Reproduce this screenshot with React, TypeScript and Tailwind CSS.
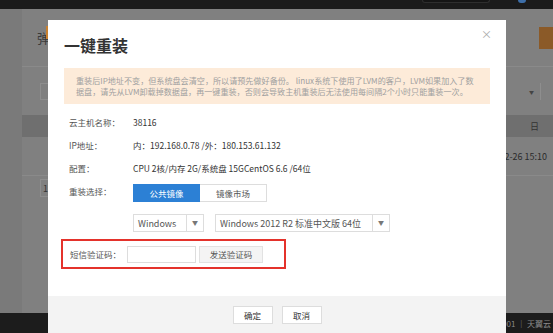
import type { ReactNode } from 'react';

const FONT = { fontFamily: '"Noto Sans CJK SC", "Noto Sans", sans-serif' };

function InfoRow({ label, children }: { label: string; children: ReactNode }) {
  return (
    <div className="flex h-[23px] items-center">
      <span className="w-[64px] shrink-0 text-[#555]">{label}</span>
      <span className="text-[#333]">{children}</span>
    </div>
  );
}

function SelectBox({ value, width }: { value: string; width: string }) {
  return (
    <div className={`flex h-[18px] ${width} items-stretch border border-[#ddd] bg-white`}>
      <span className="flex flex-1 items-center pl-[4px] text-[9px] text-[#555]">{value}</span>
      <span className="flex w-[17px] items-center justify-center border-l border-[#ddd]">
        <span className="text-[6px] leading-none text-[#777]">▼</span>
      </span>
    </div>
  );
}

// page behind the mask (already dimmed)
function BackgroundPage() {
  return (
    <div className="flex h-full flex-col bg-[#808080]">
      <div className="flex h-[9px] shrink-0 items-start bg-[#1b1b1b]">
        <div className="ml-[422px] h-[3px] w-[68px] rounded-b-[4px] border-x border-b border-[#2e2e2e] bg-[#151515]" />
        <div className="ml-[28px] h-[3px] w-[8px] rounded-b-full bg-[#3d6ea8]" />
      </div>
      <div className="flex flex-1">
        <div className="w-[22px] bg-[#7a7a7a]" />
        <div className="flex flex-1 flex-col">
          <div className="flex h-[58px] items-start border-b border-[#8a8a8a]">
            <span className="mt-[22px] ml-[15px] text-[13px] leading-none text-[#3a3a3a]">弹</span>
            <div className="mt-[17px] -ml-[4px] h-[13px] w-[3px] bg-[#c8802e]" />
            <div className="ml-auto mt-[18px] h-[22px] w-[14px] bg-[#8b5a28]" />
          </div>
          <div className="flex h-[48px] items-center">
            <div className="ml-[18px] h-[17px] w-[20px] border border-[#8e8e8e]" />
            <div className="ml-auto mr-[12px] flex h-[17px] items-center border-r border-[#8e8e8e] pr-[6px]">
              <span className="text-[5px] text-[#444]">▼</span>
            </div>
          </div>
          <div className="flex h-[22px] items-center bg-[#6f6f6f]">
            <span className="ml-auto mr-[14px] text-[9px] text-[#333]">日</span>
          </div>
          <div className="flex h-[39px] items-center border-b border-[#8a8a8a]">
            <span className="ml-auto mr-[6px] text-[9px] text-[#2b2b2b]">2-26 15:10</span>
          </div>
          <div className="mt-[3px] ml-[18px] flex h-[18px] w-[20px] items-center border border-[#8e8e8e] pl-[2px] text-[9px] text-[#333]">
            1
          </div>
        </div>
      </div>
      <div className="flex h-[20px] shrink-0 items-center bg-[#1c1c1c]">
        <span className="ml-auto mr-[2px] text-[8px] text-[#8a8a8a]">0001 ｜ 天翼云</span>
      </div>
    </div>
  );
}

export default function App() {
  return (
    <div className="relative h-[333px] w-[553px] overflow-hidden text-[8.5px] leading-[11px]" style={FONT}>
      <BackgroundPage />

      {/* ── Modal ── */}
      <div className="absolute top-[20px] left-[48px] flex h-[320px] w-[458px] flex-col bg-white">
        <div className="absolute top-[9px] right-[14px] text-[11px] leading-none text-[#aaa]">×</div>

        <div className="px-[16px]">
          <h1 className="pt-[15px] text-[16px] leading-[20px] font-bold text-[#333]">一键重装</h1>

          <div className="mt-[13px] h-[36px] whitespace-nowrap bg-[#fdebd9] px-[12px] py-[7px] text-[8.1px] text-[#a0a0a0]">
            重装后IP地址不变，但系统盘会清空，所以请预先做好备份。 linux系统下使用了LVM的客户，LVM如果加入了数
            <br />
            据盘，请先从LVM卸载掉数据盘，再一键重装，否则会导致主机重装后无法使用每间隔2个小时只能重装一次。
          </div>

          <div className="mt-[7px] flex flex-col pl-[5px]">
            <InfoRow label="云主机名称：">38116</InfoRow>
            <InfoRow label="IP地址：">内：192.168.0.78 /外：180.153.61.132</InfoRow>
            <InfoRow label="配置：">CPU 2核/内存 2G/系统盘 15GCentOS 6.6 /64位</InfoRow>

            <div className="mt-[4px] flex">
              <span className="w-[64px] shrink-0 pt-[2px] text-[#555]">重装选择：</span>
              <div className="flex flex-col">
                <div className="flex h-[18px]">
                  <span className="flex w-[67px] items-center justify-center bg-[#2c80d5] text-white">公共镜像</span>
                  <span className="flex w-[67px] items-center justify-center border border-l-0 border-[#ddd] text-[#555]">
                    镜像市场
                  </span>
                </div>
                <div className="mt-[12px] flex gap-[11px]">
                  <SelectBox value="Windows" width="w-[71px]" />
                  <SelectBox value="Windows 2012 R2 标准中文版 64位" width="w-[175px]" />
                </div>
              </div>
            </div>
          </div>

          <div className="mt-[7px] -ml-[3px] flex h-[30px] w-[225px] items-center border-2 border-[#e4322b] pl-[7px]">
            <span className="w-[57px] shrink-0 text-[#555]">短信验证码：</span>
            <div className="h-[17px] w-[69px] border border-[#ddd] bg-white" />
            <button
              type="button"
              className="ml-[3px] flex h-[17px] w-[64px] items-center justify-center border border-[#e2e2e2] bg-[#f4f4f4] text-[#555]"
            >
              发送验证码
            </button>
          </div>
        </div>

        <div className="mt-auto flex h-[44px] justify-center gap-[9px] bg-[#f3f3f3] pt-[10px]">
          <button type="button" className="h-[18px] w-[40px] border border-[#ddd] bg-white text-[#333]">
            确定
          </button>
          <button type="button" className="h-[18px] w-[40px] border border-[#ddd] bg-white text-[#333]">
            取消
          </button>
        </div>
      </div>
    </div>
  );
}
